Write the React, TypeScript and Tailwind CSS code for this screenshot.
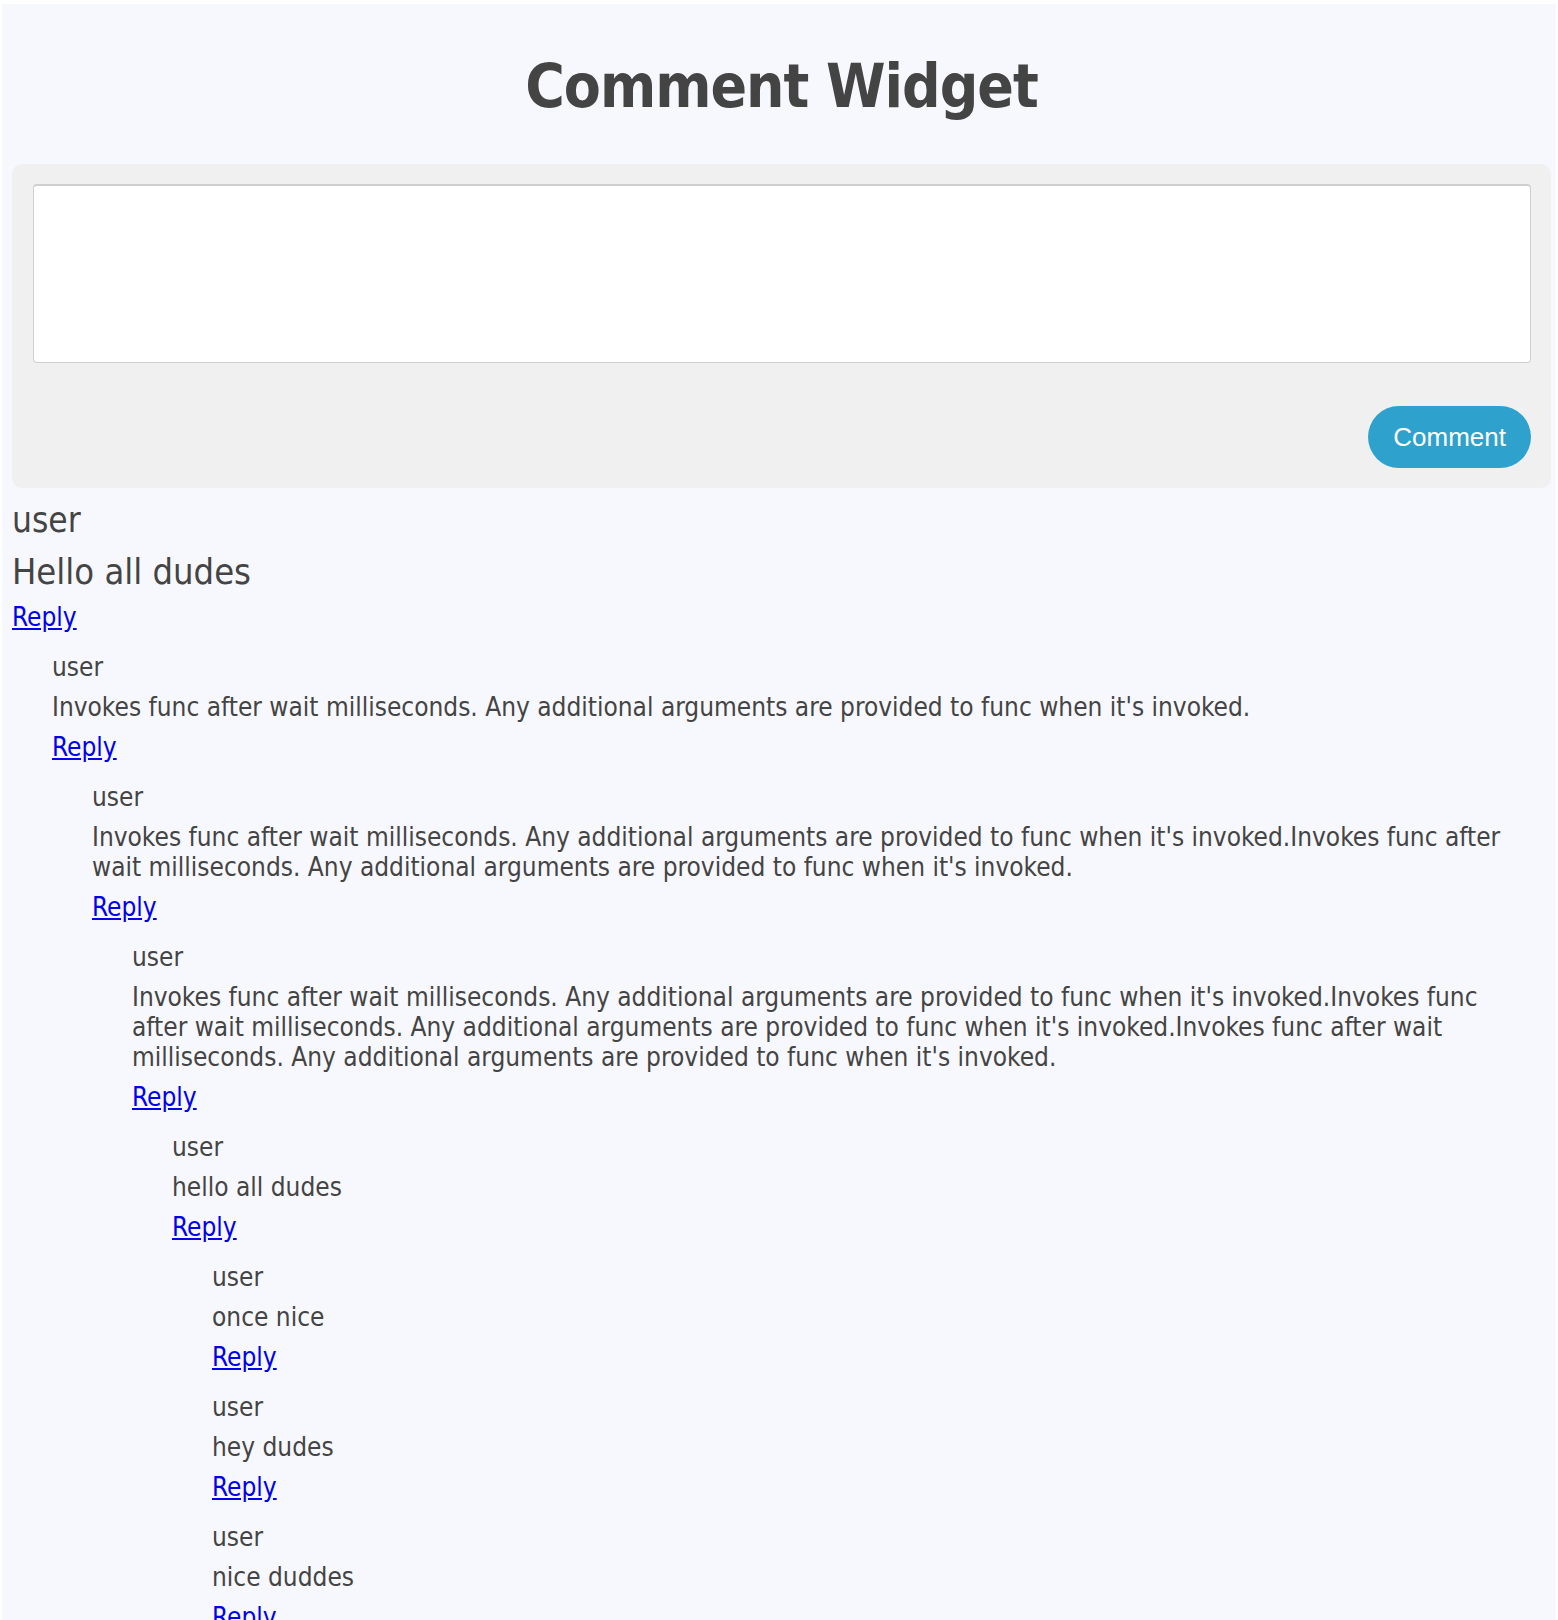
import React from 'react';

type CommentNode = {
  id: number;
  user: string;
  text: string;
  replies: CommentNode[];
};

const base = "Invokes func after wait milliseconds. Any additional arguments are provided to func when it's invoked.";

const thread: CommentNode = {
  id: 1,
  user: 'user',
  text: 'Hello all dudes',
  replies: [
    {
      id: 2,
      user: 'user',
      text: base,
      replies: [
        {
          id: 3,
          user: 'user',
          text: base + base,
          replies: [
            {
              id: 4,
              user: 'user',
              text: base + base + base,
              replies: [
                {
                  id: 5,
                  user: 'user',
                  text: 'hello all dudes',
                  replies: [
                    { id: 6, user: 'user', text: 'once nice', replies: [] },
                    { id: 7, user: 'user', text: 'hey dudes', replies: [] },
                    { id: 8, user: 'user', text: 'nice duddes', replies: [] },
                  ],
                },
              ],
            },
          ],
        },
      ],
    },
  ],
};

function ReplyLink() {
  return (
    <a href="#" onClick={(e) => e.preventDefault()} className="block w-fit text-[26px] leading-[30px] text-[#0000ee] underline">
      Reply
    </a>
  );
}

function Reply({ comment }: { comment: CommentNode }) {
  return (
    <div className="mt-[20px] pl-[40px]">
      <p className="text-[26px] leading-[30px]">{comment.user}</p>
      <p className="mt-[10px] text-[26px] leading-[30px]">{comment.text}</p>
      <div className="mt-[10px]">
        <ReplyLink />
      </div>
      {comment.replies.map((r) => (
        <Reply key={r.id} comment={r} />
      ))}
    </div>
  );
}

export default function App() {
  return (
    <div className="min-h-screen bg-white font-['DejaVu_Sans_Condensed','DejaVu_Sans',sans-serif] font-stretch-condensed text-[#444]">
      <div className="mx-[2px] mt-[4px] min-h-[1616px] bg-[#f7f8fd] pb-10 pl-[10px] pr-[5px] pt-[47px]">
        <h1 className="text-center text-[60px] font-bold leading-[70px] tracking-[-1px]">Comment Widget</h1>

        <div className="mt-[43px] rounded-[10px] bg-[#f0f0f0] pb-[20px] pl-[21px] pr-[20px] pt-[20px]">
          <textarea className="block h-[179px] w-full resize-none rounded-[4px] border border-t-2 border-[#cfcfcf] bg-white p-2 outline-none" />
          <div className="mt-[43px] flex justify-end">
            <button
              type="button"
              className="h-[62px] rounded-full bg-[#2ea1cc] px-[25px] font-['Liberation_Sans',Arial,sans-serif] text-[26px] text-white"
            >
              Comment
            </button>
          </div>
        </div>

        <div className="mt-[12px] pr-[30px]">
          <p className="text-[35px] leading-[41px]">{thread.user}</p>
          <p className="mt-[10px] text-[36px] leading-[41px]">{thread.text}</p>
          <div className="mt-[10px]">
            <ReplyLink />
          </div>
          {thread.replies.map((r) => (
            <Reply key={r.id} comment={r} />
          ))}
        </div>
      </div>
    </div>
  );
}
